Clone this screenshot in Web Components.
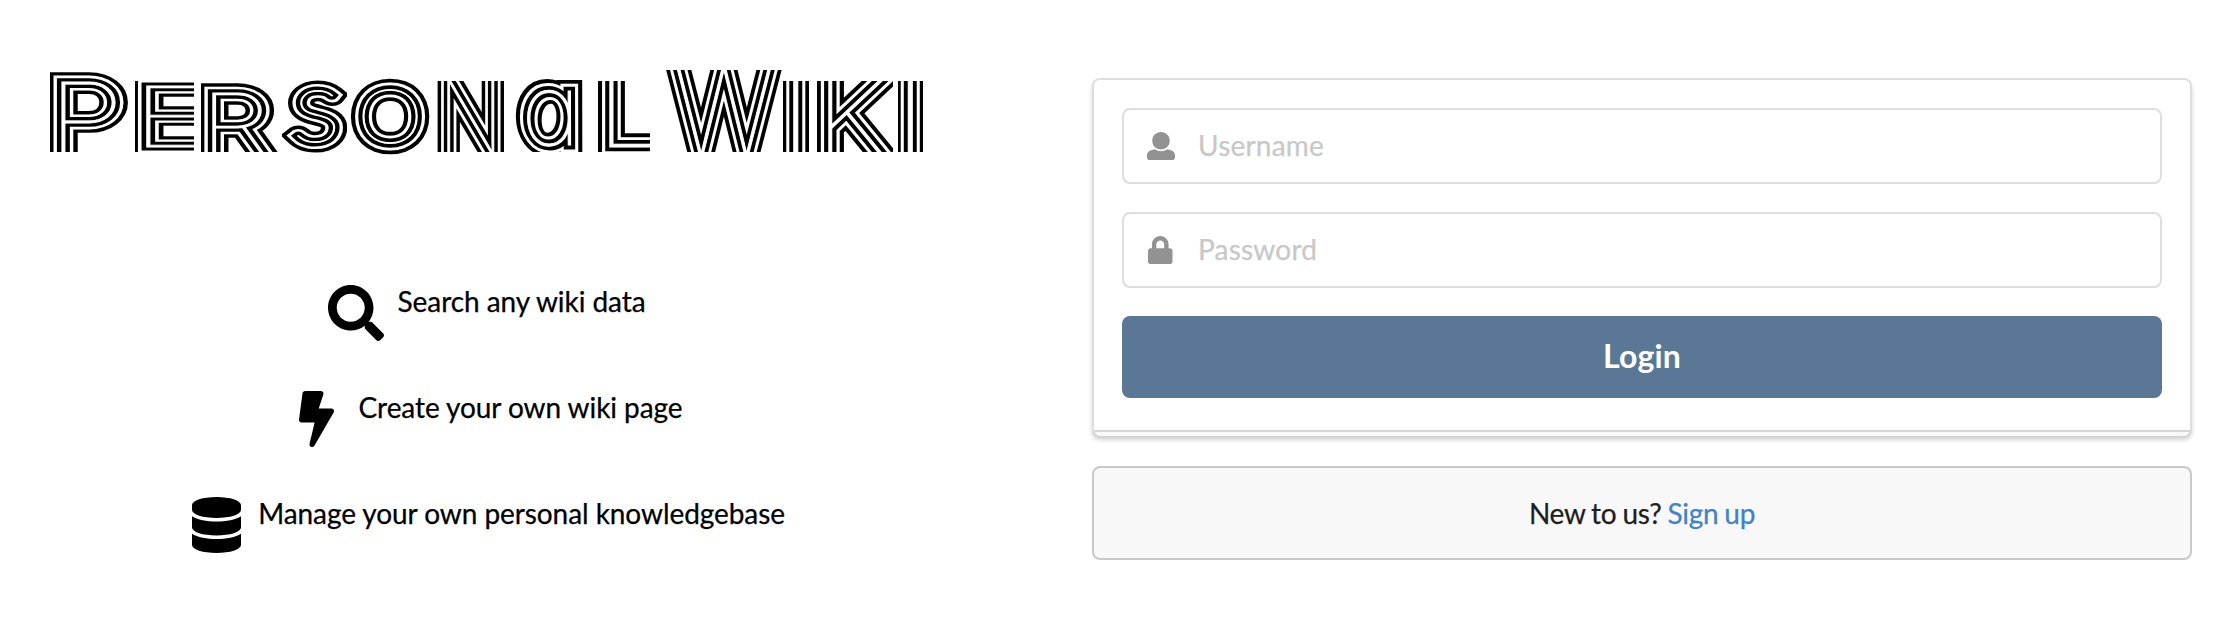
<!DOCTYPE html>
<html lang="en">
<head>
<meta charset="utf-8">
<title>Personal Wiki</title>
<style>
html,body{margin:0;background:#fff}
body{font:28px/40px Lato,"Liberation Sans",sans-serif;color:#000}
</style>
</head>
<body>
<wiki-page></wiki-page>
<script>
const ICONS={
search:[512,'M505 442.7L405.3 343c-4.5-4.5-10.6-7-17-7H372c27.6-35.3 44-79.7 44-128C416 93.1 322.9 0 208 0S0 93.1 0 208s93.1 208 208 208c48.3 0 92.7-16.4 128-44v16.3c0 6.4 2.5 12.5 7 17l99.7 99.7c9.4 9.4 24.6 9.4 33.9 0l28.3-28.3c9.4-9.4 9.4-24.6.1-34zM208 336c-70.7 0-128-57.2-128-128 0-70.7 57.2-128 128-128 70.7 0 128 57.2 128 128 0 70.7-57.2 128-128 128z'],
bolt:[320,'M296 160H180.6l42.6-129.8C227.2 15 215.7 0 200 0H56C44 0 33.8 8.9 32.2 20.8l-32 240C-1.7 275.2 9.5 288 24 288h118.7L96.6 482.5c-3.6 15.2 8 29.5 23.3 29.5 8.4 0 16.4-4.4 20.8-12l176-304c9.3-15.9-2.2-36-20.7-36z'],
database:[448,'M448 73.143v45.714C448 159.143 347.667 192 224 192S0 159.143 0 118.857V73.143C0 32.857 100.333 0 224 0s224 32.857 224 73.143zM448 176v102.857C448 319.143 347.667 352 224 352S0 319.143 0 278.857V176c48.125 33.143 136.208 48.572 224 48.572S399.874 209.143 448 176zm0 160v102.857C448 479.143 347.667 512 224 512S0 479.143 0 438.857V336c48.125 33.143 136.208 48.572 224 48.572S399.874 369.143 448 336z'],
user:[512,'M256 0c88.366 0 160 71.634 160 160s-71.634 160-160 160S96 248.366 96 160 167.634 0 256 0zm183.283 333.821l-71.313-17.828c-74.923 53.89-165.738 41.864-223.94 0l-71.313 17.828C29.981 344.505 0 382.903 0 426.955V464c0 26.51 21.49 48 48 48h416c26.51 0 48-21.49 48-48v-37.045c0-44.052-29.981-82.45-72.717-93.134z'],
lock:[448,'M400 224h-24v-72C376 68.2 307.8 0 224 0S72 68.2 72 152v72H48c-26.5 0-48 21.5-48 48v192c0 26.5 21.5 48 48 48h352c26.5 0 48-21.5 48-48V272c0-26.5-21.5-48-48-48zm-104 0H152v-72c0-39.7 32.3-72 72-72s72 32.3 72 72v72z']
};
const define=(name,render)=>customElements.define(name,class extends HTMLElement{
  connectedCallback(){if(!this.shadowRoot)this.attachShadow({mode:'open'}).innerHTML=render(this)}
});

define('wiki-icon',el=>{
  const [w,d]=ICONS[el.getAttribute('name')];
  return `<style>:host{display:flex;justify-content:center;width:1.18em;height:1em;line-height:1}svg{display:block;height:1em;width:${w/512}em;fill:currentColor}</style><svg viewBox="0 0 ${w} 512"><path d="${d}"/></svg>`;
});

/* Multi-line display lettering: a hairline face is stroked in alternating
   black and white bands, and each letter is trimmed to its own box.
   [char, clip left, clip right, clip top, ink left, ink right, cap top, baseline, font] */
const LETTERS=[
 ['P',50,130,70,61.5,116.5,81.5,152],
 ['E',135,194,81,146.5,199,86,147],
 ['R',201,280,81,212.5,266,92,155],
 ['S',282,347,78,297,335,91.5,141.5,'Lato'],
 ['O',350,430,76,362.5,417.5,89.5,142.5,'Lato'],
 ['N',436,507,81,447.5,495,78,155],
 ['a',512,591,78,529,580,91,145],
 ['L',598,650,81,609.5,660,60,147],
 ['W',660,785,70,677,772,67,155],
 ['I',783,809,81,796,796,50,180],
 ['K',817,893,81,828.5,887,77,157],
 ['I',898,923,81,910.5,910.5,50,180]
];
define('line-title',()=>{
  const ctx=document.createElement('canvas').getContext('2d');
  const g=LETTERS.map(([c,cl,cr,ct,l,r,top,base,face='Inter'],i)=>{
    const st=c==='a'?'italic ':'';
    ctx.font=`${st}100 1000px ${face}`;
    const m=ctx.measureText(c),cap=ctx.measureText(c==='a'?'x':'H').actualBoundingBoxAscent;
    const fs=(base-top)/cap*1000;
    const inkL=-m.actualBoundingBoxLeft*fs/1000,inkR=m.actualBoundingBoxRight*fs/1000;
    const sx=r>l?(r-l)/(inkR-inkL):1;
    const tx=r>l?l-inkL*sx:l-(inkL+inkR)/2;
    return `<clipPath id="c${i}"><rect x="${cl}" y="${ct}" width="${cr-cl}" height="${(c==='S'||c==='O'?156:152)-ct}"/></clipPath>
    <g clip-path="url(#c${i})" class="b1"><text id="l${i}" transform="translate(${tx} ${base}) scale(${sx} 1)${st?' skewX(9.5)':''}" style="font:${st}100 ${fs}px ${face},sans-serif">${c}</text></g>`;
  });
  const over=LETTERS.map((_,i)=>`<g clip-path="url(#c${i})"><use href="#l${i}" class="w1"/><use href="#l${i}" class="b2"/><use href="#l${i}" class="w2"/></g>`);
  return `<style>
  :host{display:block;height:180px}
  svg{display:block;overflow:visible}
  text{vector-effect:non-scaling-stroke;stroke-linejoin:miter}
  .b1{stroke:#000;fill:#000;stroke-width:23px}
  .w1{stroke:#fff;fill:#fff;stroke-width:15px}
  .b2{stroke:#000;fill:#000;stroke-width:9px}
  .w2{stroke:#fff;fill:#fff;stroke-width:1px}
  </style><svg width="968" height="180" role="img" aria-label="Personal Wiki">${g.join('')}${over.join('')}</svg>`;
});

define('feature-row',el=>`<style>
 :host{display:flex;height:56px;justify-content:center;align-items:flex-start}
 wiki-icon{font-size:56px;flex:none}
 span{margin-left:9px;line-height:32px;white-space:nowrap;letter-spacing:-.07px;-webkit-text-stroke:.25px}
 </style><wiki-icon name="${el.getAttribute('icon')}"></wiki-icon><span><slot></slot></span>`);

define('text-field',el=>`<style>
 :host{display:flex;box-sizing:border-box;height:76px;border:2px solid #dedede;border-radius:8px;align-items:center;padding-left:20px;background:#fff}
 wiki-icon{color:#929292;margin-bottom:1px}
 input{border:0;outline:0;background:none;font:inherit;letter-spacing:.2px;flex:1;min-width:0;margin:0 0 2px 21px;padding:0;height:40px}
 input::placeholder{color:#c8c8c8;opacity:1;-webkit-text-stroke:.25px}
 </style><wiki-icon name="${el.getAttribute('icon')}"></wiki-icon><input type="${el.getAttribute('type')}" placeholder="${el.getAttribute('label')}">`);

define('login-card',()=>`<style>
 :host{display:block}
 .stack{height:358px;box-sizing:border-box;border:2px solid #dedede;border-bottom:0;border-radius:8px;background:#f8f8f8;box-shadow:0 2px 0 #d4d4d5,0 4px 4px rgba(34,36,38,.2)}
 form{box-sizing:border-box;height:352px;padding:28px;background:#fff;border-bottom:2px solid #d6d6d6;border-radius:6px 6px 0 0;display:flex;flex-direction:column;gap:28px}
 button{height:82px;flex:none;border:0;border-radius:8px;background:#5a7896;color:#fff;font:bold 32px/32px Lato,"Liberation Sans",sans-serif;letter-spacing:.2px;padding:0 0 2px}
 </style><div class="stack"><form><text-field icon="user" type="text" label="Username"></text-field><text-field icon="lock" type="password" label="Password"></text-field><button type="button">Login</button></form></div>`);

define('signup-message',()=>`<style>
 :host{display:flex;box-sizing:border-box;height:94px;border:2px solid #c9c9c9;border-radius:8px;background:#f8f8f8;align-items:center;justify-content:center;color:#1e1e1e;letter-spacing:-.3px;word-spacing:-.8px;-webkit-text-stroke:.25px}
 a{color:#4183c4;text-decoration:none}
 </style><div>New to us? <a href="#">Sign up</a></div>`);

define('wiki-page',()=>`<style>
 :host{display:grid;grid-template-columns:1092px 1100px;height:634px;overflow:hidden}
 .intro{width:968px}
 .features{display:grid;gap:50px;margin-top:105px}
 feature-row:nth-child(2){margin-left:-2px}
 .login{padding-top:78px;display:flex;flex-direction:column;gap:30px}
 </style>
 <section class="intro"><line-title></line-title>
 <div class="features"><feature-row icon="search">Search any wiki data</feature-row><feature-row icon="bolt">Create your own wiki page</feature-row><feature-row icon="database">Manage your own personal knowledgebase</feature-row></div></section>
 <section class="login"><login-card></login-card><signup-message></signup-message></section>`);
</script>
</body>
</html>
